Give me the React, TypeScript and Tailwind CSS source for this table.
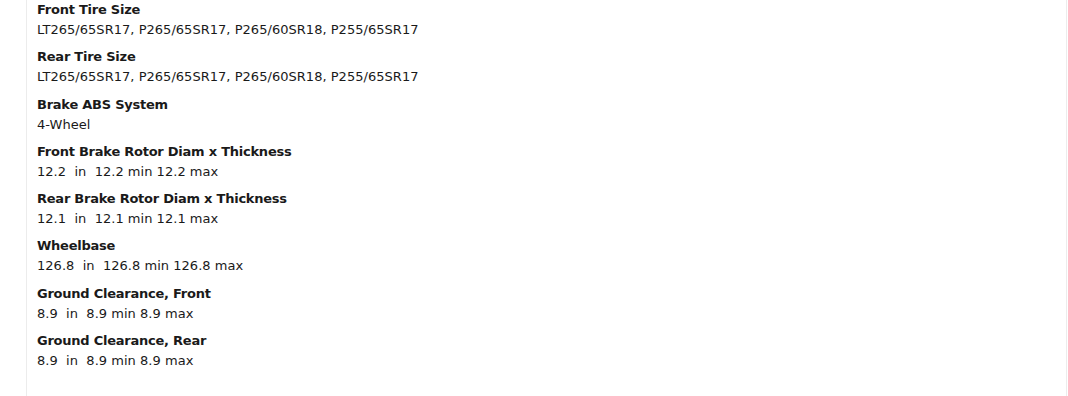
const specs = [
  { label: "Front Tire Size", value: "LT265/65SR17, P265/65SR17, P265/60SR18, P255/65SR17" },
  { label: "Rear Tire Size", value: "LT265/65SR17, P265/65SR17, P265/60SR18, P255/65SR17" },
  { label: "Brake ABS System", value: "4-Wheel" },
  { label: "Front Brake Rotor Diam x Thickness", value: "12.2\u00a0 in\u00a0 12.2 min 12.2 max" },
  { label: "Rear Brake Rotor Diam x Thickness", value: "12.1\u00a0 in\u00a0 12.1 min 12.1 max" },
  { label: "Wheelbase", value: "126.8\u00a0 in\u00a0 126.8 min 126.8 max" },
  { label: "Ground Clearance, Front", value: "8.9\u00a0 in\u00a0 8.9 min 8.9 max" },
  { label: "Ground Clearance, Rear", value: "8.9\u00a0 in\u00a0 8.9 min 8.9 max" },
];

export default function App() {
  return (
    <div className="w-[1068px] h-[396px] bg-white overflow-hidden">
      <div className="ml-[26px] w-[1041px] h-full border-x border-[#ececec] pl-[10px] text-[13px] text-[#1a1a1a] font-['Verdana','DejaVu_Sans',sans-serif]">
        <dl>
          {specs.map((s) => (
            <div key={s.label} className="mb-[7.3px]">
              <dt className="font-bold leading-[20px] tracking-[-0.24px]">{s.label}</dt>
              <dd className="leading-[20px] tracking-[0.03px]">{s.value}</dd>
            </div>
          ))}
        </dl>
      </div>
    </div>
  );
}
